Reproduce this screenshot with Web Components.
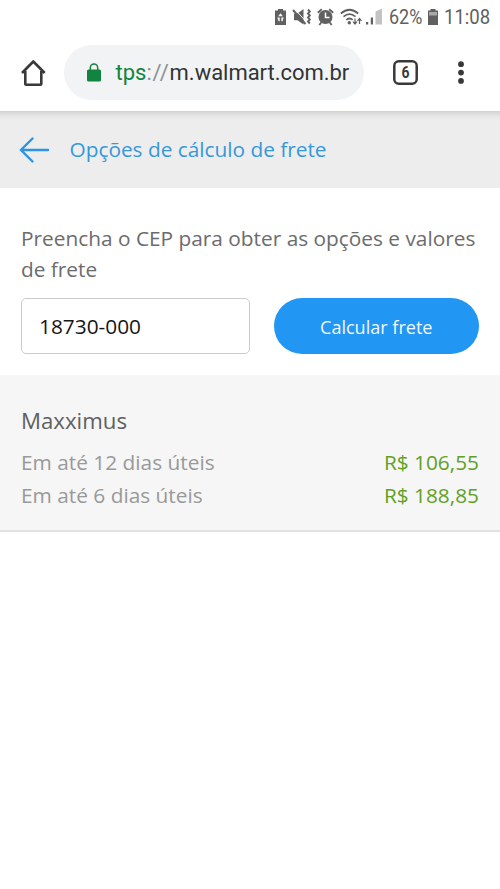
<!DOCTYPE html>
<html lang="pt-BR"><head><meta charset="utf-8"><title>Opções de cálculo de frete</title>
<style>html,body{margin:0;background:#fff}body{font-family:"Open Sans","Noto Sans",sans-serif;font-size:20.83px}</style></head>
<body>
<freight-app></freight-app>
<script>
function define(name, markup){
  const t=document.createElement('template');t.innerHTML=markup;
  customElements.define(name,class extends HTMLElement{
    constructor(){super();this.attachShadow({mode:'open'}).append(t.content.cloneNode(true));}
  });
}
define('status-bar',`
<style>
:host{display:flex;height:34px;align-items:center;justify-content:flex-end;padding-right:9px;color:#606060;font:19.5px/34px Roboto,sans-serif;box-sizing:border-box}
svg{display:block;flex:none}
.pct,.time{display:block;white-space:nowrap;transform-origin:0 50%;margin-top:2px}
.pct{width:34px;margin-left:5px;transform:scaleX(.92)}
.bat{margin:0 5px 0 4px}
.time{width:47px;transform:scaleX(.95)}
</style>
<svg width="114" height="34" viewBox="270 0 114 34" fill="#606060">
<path d="M278 9h5v1.500h3v14.500h-11V10.500h3z"/>
<path d="M280.500 13.300l2.400 3h-4.800zM277.300 17.500h2.400v3.800h-1.200zM283.700 17.500h-2.400v3.800h1.200z" fill="#f4f4f4"/>
<path d="M294 13.500h3.500l6-4.500v15.500l-6-4.300H294z"/>
<path d="M294.800 9.300l12 13" stroke="#fff" stroke-width=".9"/><path d="M293 10l12.500 14" stroke="#606060" stroke-width="1.900"/>
<path d="M308 9.500l1.800 2-1.800 2 1.800 2-1.800 2 1.800 2-1.800 2 1.800 2" fill="none" stroke="#606060" stroke-width="1.900"/>
<circle cx="325.500" cy="17" r="7"/><path d="M317.800 12.700l4-3.500M333.200 12.700l-4-3.500M319.300 25l2.300-3M331.700 25l-2.300-3" stroke="#606060" stroke-width="1.800"/>
<path d="M325.500 12.500v5h4" fill="none" stroke="#fff" stroke-width="1.500"/>
<g fill="none" stroke="#606060" stroke-width="1.700"><path d="M340.800 13.500q8.700-7.500 17.400 0M343.500 16.700q6-5 12 0M346.300 19.800q3.200-2.600 6.400 0"/></g><circle cx="349.300" cy="22.800" r="1.700"/>
<path d="M355 18.500v5M353 21.700l2 2.300 2-2.300M359.500 24v-5M357.500 20.800l2-2.300 2 2.300" fill="none" stroke="#606060" stroke-width="1.200"/>
<path d="M366 22h2.200v2.500H366zM370.800 17.500h2.200v7h-2.200z"/><path d="M375.500 11.500l6.500-3v16h-6.500z" fill="#c3c3c3"/>
</svg>
<span class="pct">62%</span>
<svg class="bat" width="12" height="34"><path d="M3.500 9h5v1.500H11V25H1V10.500h2.500z" fill="#606060"/><path d="M2 12h8v3.500H2z" fill="#aaa"/></svg>
<span class="time">11:08</span>`);
define('browser-bar',`
<style>
:host{display:flex;align-items:center;height:77px;padding:0 28px 0 20px;box-sizing:border-box;background:#fff}
svg{display:block;flex:none}
.pill{display:flex;align-items:center;width:300px;height:55px;border-radius:28px;background:#f1f3f5;margin:0 28px 0 17px;padding-left:22px;box-sizing:border-box;font:22px/55px Roboto,sans-serif;color:#333;white-space:nowrap}
.url{margin-left:13.500px}.s{color:#11843f}.g{color:#8c9094;letter-spacing:.7px}.d{letter-spacing:-.03px}
</style>
<svg width="27" height="28" viewBox="0 0 27 28" fill="none" stroke="#393939" stroke-width="2.600" stroke-linejoin="round"><path d="M2 14L13.300 2.500 24.700 14M5.300 12v13q0 .8.800.8h14.400q.8 0 .8-.8V12"/></svg>
<div class="pill"><svg width="16" height="20" viewBox="0 0 16 20"><rect x="1" y="6.500" width="14" height="12" rx="1.500" fill="#11843f"/><path d="M4.300 8V4.700a3.700 3.700 0 017.400 0V8" fill="none" stroke="#11843f" stroke-width="1.500"/></svg>
<span class="url"><span class="s">tps</span><span class="g">://</span><span class="d">m.walmart.com.br</span></span></div>
<svg width="80" height="28" viewBox="392 58 80 28"><rect x="394.300" y="60.300" width="22.400" height="22.400" rx="4.500" fill="none" stroke="#393939" stroke-width="2.500"/><text x="405.500" y="77.200" font-family="Roboto" font-weight="700" font-size="16" text-anchor="middle" fill="#393939" textLength="8" lengthAdjust="spacingAndGlyphs">6</text><g fill="#393939"><circle cx="461" cy="63.200" r="2.900"/><circle cx="461" cy="71.600" r="2.900"/><circle cx="461" cy="79.900" r="2.900"/></g></svg>`);
define('page-heading',`
<style>
:host{display:flex;align-items:center;height:77px;padding:0 20px 0 19px;gap:19.500px;box-sizing:border-box;color:#3598dc;line-height:30px;background:linear-gradient(#cfcfcf,#dadada 2px,#e6e6e6 5px,#ededed 10px)}
svg{display:block}span{margin-top:-2px;letter-spacing:-.01px}
</style>
<svg width="31" height="28" viewBox="0 0 31 28" fill="none" stroke="#2d94e3" stroke-width="2.400" stroke-linecap="round"><path d="M2.500 14H29M13.500 2.500L2 14l11.500 11.500"/></svg><span><slot></slot></span>`);
define('freight-form',`
<style>
:host{display:block;height:187px;box-sizing:border-box;padding:35px 21px 0;color:#6c6c6c}
p{margin:0;line-height:30.500px}
.row{display:grid;grid-template-columns:229px 205.500px;justify-content:space-between;margin-top:14px}
input{box-sizing:border-box;height:56px;width:100%;border:1.500px solid #ccc;border-radius:5px;padding:0 17px;font:20.830px "Open Sans",sans-serif;color:#151515;background:#fff}
button{height:56px;border:0;border-radius:28px;background:#2196f3;color:#f0f8ff;font:18.060px "Open Sans",sans-serif;padding:1px 0 0}
</style>
<p><slot></slot></p><div class="row"><input value="18730-000" aria-label="CEP"><button>Calcular frete</button></div>`);
define('quote-panel',`
<style>
:host{display:block;height:157px;box-sizing:border-box;background:#f6f6f6;border-bottom:2px solid #e1e1e1;padding:30px 21px 0}
h2{margin:0 0 9px;font-weight:400;font-size:22.220px;line-height:32px;color:#606060}
</style><h2><slot name="title"></slot></h2><slot></slot>`);
define('quote-row',`
<style>:host{display:flex;justify-content:space-between;line-height:33.300px;color:#999}b{font-weight:400;color:#62a01f}</style>
<span><slot></slot></span><b><slot name="price"></slot></b>`);
define('freight-app',`
<style>:host{display:block;width:500px;height:889px;overflow:hidden;background:#fff}</style>
<status-bar></status-bar><browser-bar></browser-bar>
<page-heading>Opções de cálculo de frete</page-heading>
<freight-form>Preencha o CEP para obter as opções e valores de frete</freight-form>
<quote-panel><span slot="title">Maxximus</span>
<quote-row>Em até 12 dias úteis<span slot="price">R$ 106,55</span></quote-row>
<quote-row>Em até 6 dias úteis<span slot="price">R$ 188,85</span></quote-row></quote-panel>`);
</script></body></html>
